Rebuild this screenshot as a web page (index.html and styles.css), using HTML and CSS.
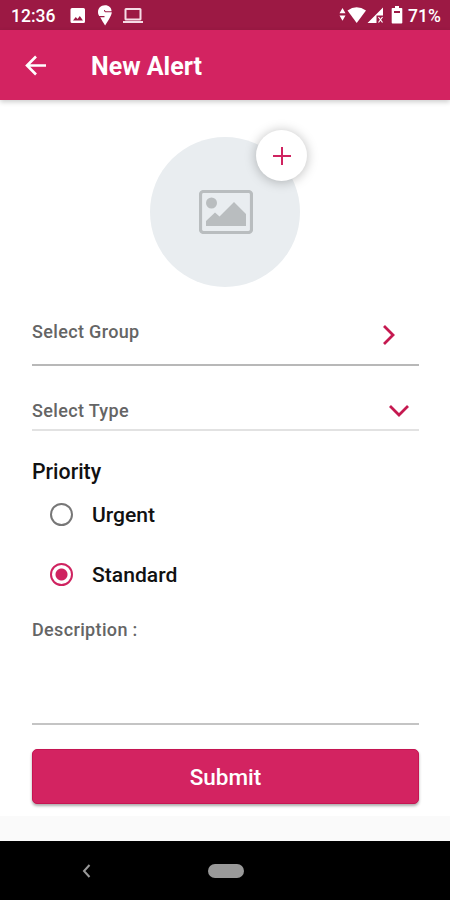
FILE: index.html
```html
<!DOCTYPE html>
<html lang="en">
<head>
<meta charset="utf-8">
<title>New Alert</title>
<link rel="stylesheet" href="styles.css">
</head>
<body>
<div class="screen">
  <div class="status">
    <span class="clock">12:36</span>
    <svg class="notifications" width="75" height="30" viewBox="0 0 75 30" fill="#fff">
      <path fill-rule="evenodd" d="M2 8h11.500q1.500 0 1.500 1.500v12q0 1.500-1.500 1.500h-11.500q-1.500 0-1.500-1.500v-12q0-1.500 1.500-1.500zM3 20.500h10l-3.200-4.500-2.300 3-1.700-2z"/>
      <path d="M35 5.300c-4.500 0-7 3.100-7 6.700 0 1.600.5 2.800 1.200 4h5.300v1.300h-4.300c1.200 2.400 3.100 5.200 4.900 8.300 3-5 6.400-9.500 6.700-13.300h-5.500c-1.500 0-2.300-.6-2.300-2.300h1c0 .8.300 1.300 1.200 1.300h5.400c-.2-3.500-2.500-6-6.600-6z"/>
      <path fill-rule="evenodd" d="M56 8h14q1.500 0 1.500 1.500v9.500q0 1.500-1.500 1.500h-14q-1.500 0-1.500-1.500v-9.500q0-1.500 1.500-1.500zm.5 2v8.500h13v-8.500zM53 21h20v2h-20z" fill="#f5dce5"/>
    </svg>
    <svg class="signals" width="68" height="30" viewBox="0 0 68 30" fill="#fff">
      <path d="M.5 13.300l3-5.300 3 5.300zM.5 15.500h6l-3 5.300z"/>
      <path d="M8.500 10.500q9-6.500 18.500 0l-9.300 12.500z"/>
      <path d="M44 7.500v8h-6.500v7.500h-9z"/>
      <path d="M39.500 17l4 5.500m0-5.500l-4 5.500" stroke="#fff" stroke-width="1.200"/>
      <path fill-rule="evenodd" d="M56 6h4v2h2.500q.8 0 .8.800v14q0 .8-.8.800h-9q-.8 0-.8-.8v-14q0-.8.800-.8h2.500zM55 11v2h6v-2z"/>
    </svg>
    <span class="charge">71%</span>
  </div>
  <header class="appbar">
    <svg width="22" height="22" viewBox="0 0 22 22" fill="none" stroke="#fff" stroke-width="2.600"><path d="M21 10.500H2.500M11 1.500l-9 9 9 9"/></svg>
    <h1>New Alert</h1>
  </header>
  <main>
    <div class="avatar">
      <svg class="placeholder" width="54" height="44" viewBox="0 0 54 44">
        <rect x="1.500" y="1.500" width="51" height="41" rx="3" fill="none" stroke="#b9bdbf" stroke-width="3.200"/>
        <circle cx="12.500" cy="13" r="5.500" fill="#b9bdbf"/>
        <path d="M7 36v-5l9-8.500 4.500 4L35 12l12 12v12z" fill="#b9bdbf"/>
      </svg>
      <button class="add" aria-label="Add image"><svg width="18" height="18" viewBox="0 0 18 18" fill="none" stroke="#cf2360" stroke-width="2"><path d="M9 0v18M0 9h18"/></svg></button>
    </div>
    <div class="field group">
      <span class="label">Select Group</span>
      <svg width="14" height="22" viewBox="0 0 14 22" fill="none" stroke="#c51950" stroke-width="2.800"><path d="M2 2l9 9-9 9"/></svg>
    </div>
    <div class="field type">
      <span class="label">Select Type</span>
      <svg width="20" height="14" viewBox="0 0 20 14" fill="none" stroke="#c51950" stroke-width="2.800"><path d="M1 2l9 9 9-9"/></svg>
    </div>
    <h2>Priority</h2>
    <div class="option"><span class="radio"></span>Urgent</div>
    <div class="option"><span class="radio checked"></span>Standard</div>
    <div class="description label">Description :</div>
    <button class="submit">Submit</button>
  </main>
  <div class="footer"></div>
  <nav>
    <svg width="9" height="14" viewBox="0 0 9 14" fill="none" stroke="#999" stroke-width="2"><path d="M7.500 1L2 7l5.500 6"/></svg>
    <span class="home"></span>
  </nav>
</div>
</body>
</html>
```
FILE: styles.css
```css
* { box-sizing: border-box; }
body { margin: 0; background: #fff; font-family: Roboto, sans-serif; }
h1, h2 { margin: 0; font-weight: 500; }
button { border: 0; padding: 0; font-family: inherit; }
svg { display: block; flex: none; }
.screen { width: 450px; height: 900px; display: flex; flex-direction: column; overflow: hidden; }
.status { height: 30px; flex: none; display: flex; align-items: center; background: #9c1944; color: #fff; padding: 0 9px 0 11px; font-size: 17.500px; font-weight: 500; }
.clock { width: 59px; padding-top: 2px; }
.signals { margin-left: auto; }
.charge { width: 33px; margin-left: 1px; padding-top: 2px; white-space: nowrap; }
.appbar { height: 70px; flex: none; display: flex; align-items: center; padding: 1px 0 0 25px; background: #d32361; color: #fff; box-shadow: 0 2px 5px #0003; }
.appbar h1 { margin: 2px 0 0 44px; font-size: 25px; font-weight: 700; line-height: 30px; }
main { height: 716px; flex: none; padding: 37px 31px 0 32px; display: flex; flex-direction: column; }
.avatar { position: relative; width: 150px; height: 150px; margin-left: 118px; flex: none; border-radius: 50%; background: #e9edf0; display: flex; align-items: center; justify-content: center; }
.placeholder { margin-left: 2px; }
.add { position: absolute; top: -7px; left: 106px; width: 51px; height: 51px; border-radius: 50%; background: #fff; display: flex; align-items: center; justify-content: center; box-shadow: 0 1px 12px #0004; }
.label { color: #656565; font-size: 18px; font-weight: 500; line-height: 24px; letter-spacing: .35px; }
.field { display: flex; justify-content: space-between; align-items: flex-start; flex: none; }
.group { height: 79px; padding: 33px 23px 0 0; border-bottom: 2px solid #b8b8b8; }
.group svg { margin-top: 4px; }
.type { height: 65px; padding: 33px 10px 0 0; border-bottom: 2px solid #e2e2e2; }
.type svg { margin-top: 5px; }
h2 { margin-top: 27px; height: 26px; line-height: 28px; font-size: 21.300px; color: #111; }
.option { height: 60px; flex: none; display: flex; align-items: center; padding-left: 18px; font-size: 21.100px; font-weight: 500; color: #111; }
.radio { width: 23px; height: 23px; margin-right: 19px; border: 2px solid #777; border-radius: 50%; }
.checked { border-color: #cf2360; background: radial-gradient(circle, #cf2360 5.500px, #fff 6.500px); }
.description { height: 121px; flex: none; padding-top: 14px; border-bottom: 2px solid #c4c4c4; }
.submit { height: 55px; flex: none; margin-top: 24px; border: 1px solid #c51552; border-radius: 5px; background: #d32361; color: #fff; font-size: 22.500px; font-weight: 500; box-shadow: 0 2px 3px #0005; }
.footer { height: 25px; flex: none; background: #fafafa; }
nav { height: 59px; flex: none; display: flex; align-items: center; padding-left: 82px; background: #000; }
.home { width: 36px; height: 14px; margin-left: 117px; border-radius: 7px; background: #999; }
```
